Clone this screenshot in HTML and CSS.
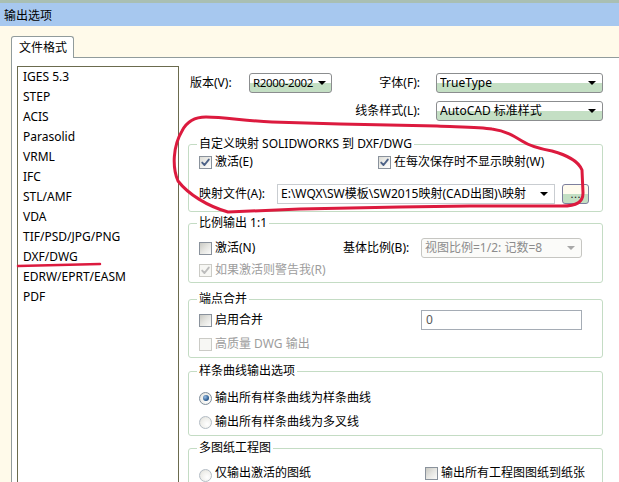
FILE: index.html
```html
<!DOCTYPE html>
<html>
<head>
<meta charset="utf-8">
<title>输出选项</title>
<link rel="stylesheet" href="styles.css">
</head>
<body>
<div class="window">
  <div class="topstrip"></div>
  <div class="titlebar">输出选项</div>
  <div class="client">
    <div class="tabs"><div class="tab">文件格式</div></div>
    <div class="panel">
      <ul class="formats">
        <li>IGES 5.3</li>
        <li>STEP</li>
        <li>ACIS</li>
        <li>Parasolid</li>
        <li>VRML</li>
        <li>IFC</li>
        <li>STL/AMF</li>
        <li>VDA</li>
        <li>TIF/PSD/JPG/PNG</li>
        <li>DXF/DWG</li>
        <li>EDRW/EPRT/EASM</li>
        <li>PDF</li>
      </ul>
      <div class="opts">
        <div class="topgrid">
          <span class="lbl">版本(V):</span>
          <div class="combo combo-ver"><span class="val">R2000-2002</span><span class="arrow"></span></div>
          <span class="lbl lbl-r">字体(F):</span>
          <div class="combo"><span class="val">TrueType</span><span class="arrow"></span></div>
          <span class="lbl lbl-r span3">线条样式(L):</span>
          <div class="combo"><span class="val">AutoCAD 标准样式</span><span class="arrow"></span></div>
        </div>

        <fieldset class="grp grp-map">
          <legend>自定义映射 SOLIDWORKS 到 DXF/DWG</legend>
          <div class="row">
            <label class="chk w179"><span class="cb"><svg viewBox="0 0 11 11" width="11" height="11"><polyline points="2.2,5.6 4.5,8 8.8,2.6" class="tick"/></svg></span>激活(E)</label>
            <label class="chk"><span class="cb"><svg viewBox="0 0 11 11" width="11" height="11"><polyline points="2.2,5.6 4.5,8 8.8,2.6" class="tick"/></svg></span>在每次保存时不显示映射(W)</label>
          </div>
          <div class="row row-file">
            <span class="w78">映射文件(A):</span>
            <div class="combo combo-file"><span class="val">E:\WQX\SW模板\SW2015映射(CAD出图)\映射</span><span class="arrow"></span></div>
            <div class="btn"><span class="dots">...</span></div>
          </div>
        </fieldset>

        <fieldset class="grp grp-scale">
          <legend>比例输出 1:1</legend>
          <div class="row row-first">
            <label class="chk w144"><span class="cb cb-off"></span>激活(N)</label>
            <span class="w78">基体比例(B):</span>
            <div class="combo combo-dis"><span class="val">视图比例=1/2: 记数=8</span><span class="arrow"></span></div>
          </div>
          <div class="row row-2">
            <label class="chk dis"><span class="cb cb-dis"><svg viewBox="0 0 11 11" width="11" height="11"><polyline points="2.2,5.6 4.5,8 8.8,2.6" class="tick tick-dis"/></svg></span>如果激活则警告我(R)</label>
          </div>
        </fieldset>

        <fieldset class="grp grp-merge">
          <legend>端点合并</legend>
          <div class="row row-first">
            <label class="chk w222"><span class="cb cb-off"></span>启用合并</label>
            <div class="textbox">0</div>
          </div>
          <div class="row row-4">
            <label class="chk dis"><span class="cb cb-dis"></span>高质量 DWG 输出</label>
          </div>
        </fieldset>

        <fieldset class="grp grp-spline">
          <legend>样条曲线输出选项</legend>
          <div class="row row-first">
            <label class="chk"><span class="rd rd-on"><span class="dot"></span></span>输出所有样条曲线为样条曲线</label>
          </div>
          <div class="row row-4">
            <label class="chk"><span class="rd"></span>输出所有样条曲线为多叉线</label>
          </div>
        </fieldset>

        <fieldset class="grp grp-multi">
          <legend>多图纸工程图</legend>
          <div class="row row-top">
            <label class="chk w226"><span class="rd"></span>仅输出激活的图纸</label>
            <label class="chk chk-wrap"><span class="cb cb-off"></span><span class="wraptext">输出所有工程图图纸到纸张空间</span></label>
          </div>
        </fieldset>
      </div>
    </div>
  </div>

  <svg class="marks" width="619" height="482" viewBox="0 0 619 482">
    <path d="M182,131 C187,121 196,117 206,117 C225,117 245,121 272,122 L340,124 L437,126 C462,127 481,127 492,129 C506,131 514,136 522,141 C531,147 541,149 552,151 C566,155 578,160 582,170 L583,193 C583,202 577,206 562,206 L470,206 L400,207 L300,209 L228,212 C207,206 188,194 178,181 C172,167 173,146 182,131 Z" />
    <path d="M18,266 L100,264" class="uline" />
  </svg>
</div>
</body>
</html>
```

FILE: styles.css
```css
* { box-sizing: border-box; }
html, body { margin: 0; padding: 0; }
body {
  font-family: "Noto Sans", "Noto Sans CJK SC", sans-serif;
  font-size: 12px;
  color: #000;
  background: #fffaea;
}
.window {
  position: relative;
  width: 619px;
  height: 482px;
  overflow: hidden;
  background: #fffaea;
}
.topstrip { height: 3px; background: #a9bfb3; }
.titlebar {
  height: 23px;
  background: #a7c8ef;
  padding: 3px 0 0 4px;
  line-height: 20px;
}
.client { padding: 10px 0 0 11px; }
.tabs { display: flex; height: 21px; }
.tab {
  width: 63px;
  height: 22px;
  border: 1px solid #919b9c;
  border-bottom: none;
  border-radius: 3px 3px 0 0;
  background: #fff;
  padding-left: 7px;
  line-height: 21px;
  position: relative;
  z-index: 1;
}
.panel {
  display: flex;
  gap: 9px;
  width: 640px;
  height: 440px;
  border: 1px solid #919b9c;
  border-right: none;
  background: #fff;
  padding: 8px 0 0 5px;
}
.formats {
  list-style: none;
  margin: 0;
  padding: 0;
  width: 162px;
  border: 1px solid #6b6b4e;
  background: #fff;
}
.formats li { height: 20px; line-height: 20px; padding-left: 5px; white-space: nowrap; }

.opts { width: 415px; padding-top: 7px; }
.topgrid {
  display: grid;
  grid-template-columns: 61px 83px 1fr 167px;
  grid-auto-rows: 20px;
  row-gap: 8px;
}
.lbl { line-height: 20px; padding-left: 2px; white-space: nowrap; }
.lbl-r { text-align: right; padding-right: 16px; padding-left: 0; }
.span3 { grid-column: 1 / 4; }

.combo {
  display: flex;
  align-items: center;
  height: 20px;
  border: 1px solid #8b8d8f;
  border-radius: 3px;
  background: linear-gradient(#ffffff 0%, #ffffff 50%, #c4dfc4 50%, #c4dfc4 100%);
  padding-left: 3px;
  white-space: nowrap;
  overflow: hidden;
}
.combo .val { flex: 1; line-height: 18px; overflow: hidden; }
.combo-ver .val { font-size: 11.5px; letter-spacing: -0.35px; overflow: visible; }
.combo-ver .arrow { margin-right: 5px; }
.arrow {
  width: 0; height: 0;
  border-left: 4px solid transparent;
  border-right: 4px solid transparent;
  border-top: 4px solid #000;
  margin-right: 6px;
  flex: none;
}
.combo-file {
  width: 278px;
  background: #fff;
  border-color: #c9cdd1;
  border-radius: 0;
}
.combo-dis {
  width: 161px;
  background: #fbfbf9;
  border-color: #c6c6c2;
  color: #8c8c8c;
}
.combo-dis .arrow { border-top-color: #a8a8a8; }

.grp {
  margin: 0;
  padding: 0 8px 0 10px;
  border: 1px solid #c4dcc4;
  border-radius: 3px;
  min-width: 0;
}
.grp legend {
  font-size: 12px;
  line-height: 16px;
  padding: 0 2px;
  margin-left: -2px;
}
.grp-map { margin-top: 15px; padding-bottom: 7px; }
.grp-scale { margin-top: 3px; padding-bottom: 2px; }
.grp-merge { margin-top: 8px; padding-bottom: 3px; }
.grp-spline { margin-top: 5px; padding-bottom: 3px; }
.grp-multi { margin-top: 4px; padding-bottom: 10px; }

.row { display: flex; align-items: center; height: 20px; }
.row-file { margin-top: 12px; }
.grp-scale .row-first { margin-top: 7px; }
.row-2 { margin-top: 2px; }
.grp-merge .row-first { margin-top: 3px; }
.row-4 { margin-top: 4px; }
.grp-spline .row-first { margin-top: 9px; }
.row-top { margin-top: 7px; align-items: flex-start; height: auto; }

.chk { display: flex; align-items: center; gap: 3px; line-height: 20px; white-space: nowrap; flex: none; }
.chk.dis { color: #9d9d9d; }
.w179 { width: 179px; }
.w144 { width: 144px; }
.w222 { width: 222px; }
.w226 { width: 226px; }
.w78 { width: 78px; flex: none; line-height: 20px; white-space: nowrap; }

.cb {
  width: 13px; height: 13px;
  flex: none;
  border: 1px solid #8a929c;
  background: linear-gradient(135deg, #dcdcd6 0%, #f1f1ee 55%, #ffffff 100%);
  display: flex;
}
.cb-off { background: linear-gradient(135deg, #c9c9c3 0%, #e6e6e2 50%, #fbfbfa 100%); }
.cb-dis { border-color: #cbcbc6; background: #f7f7f4; }
.tick { fill: none; stroke: #4d6287; stroke-width: 1.9; stroke-linecap: round; stroke-linejoin: round; }
.tick-dis { stroke: #bcbcbc; }

.chk-wrap { align-items: flex-start; }
.chk-wrap .cb { margin-top: 4px; }
.wraptext { white-space: normal; width: 146px; line-height: 16px; padding-top: 2px; }

.rd {
  width: 13px; height: 13px;
  flex: none;
  border-radius: 50%;
  border: 1px solid #b3bcc4;
  background: radial-gradient(circle at 65% 65%, #ffffff 0%, #eeeeea 60%, #d9d9d4 100%);
  display: flex;
  align-items: center;
  justify-content: center;
}
.rd-on { border-color: #7f8d9b; }
.dot {
  width: 6px; height: 6px;
  border-radius: 50%;
  background: radial-gradient(circle at 35% 35%, #9cc0e6 0%, #2f5f93 60%, #1d3f68 100%);
}
.row-top .rd { margin-top: 4px; }

.btn {
  display: flex;
  align-items: flex-end;
  justify-content: center;
  width: 27px;
  height: 20px;
  margin-left: 7px;
  border: 1px solid #7d7f9d;
  border-radius: 3px;
  background: linear-gradient(#fffbee 0%, #fffbee 50%, #c3dfc3 50%, #c3dfc3 100%);
  padding-bottom: 3px;
}
.dots {
  font-family: "DejaVu Sans", sans-serif;
  font-size: 11px;
  line-height: 11px;
  color: #222;
  letter-spacing: 0;
}
.textbox {
  width: 161px;
  height: 20px;
  border: 1px solid #a5acb5;
  background: #fff;
  padding-left: 4px;
  line-height: 18px;
  color: #5a5a5a;
}

.marks {
  position: absolute;
  top: 0; left: 0;
  pointer-events: none;
  z-index: 5;
}
.marks path {
  fill: none;
  stroke: #dc1a3e;
  stroke-width: 3;
  stroke-linecap: round;
  stroke-linejoin: round;
}
.marks .uline { stroke-width: 2.5; }
```
